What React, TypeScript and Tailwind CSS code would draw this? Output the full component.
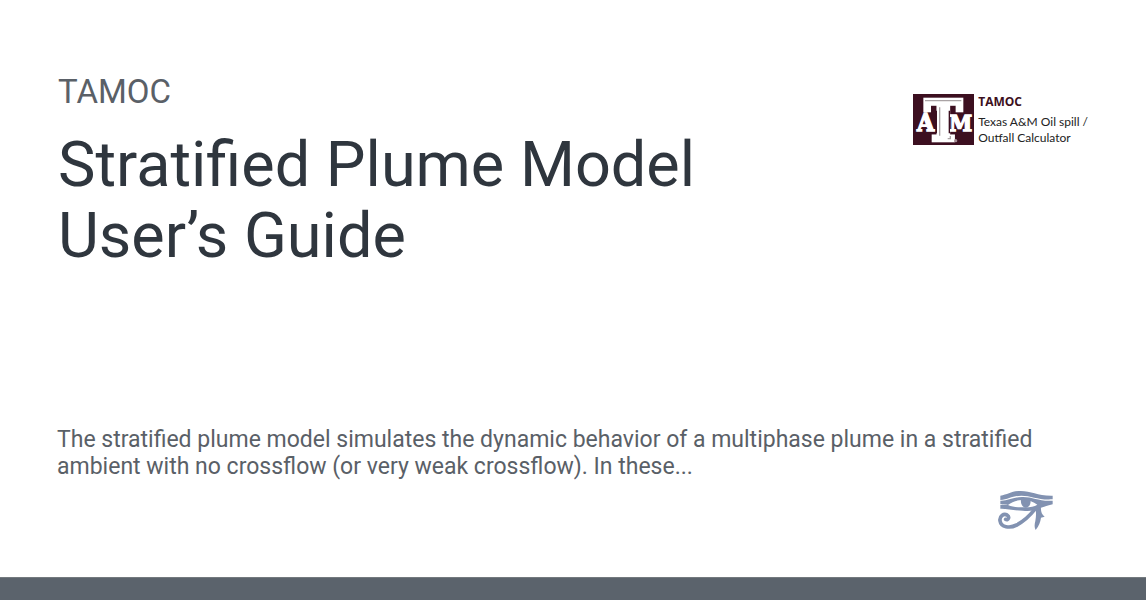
function UniversityMark() {
  return (
    <svg className="h-[51px] w-[61px] shrink-0 overflow-visible" viewBox="0 0 183 153" role="img" aria-label="Texas A&M">
      <rect width="183" height="153" fill="#3c0f20" />
      <g fontFamily="'DejaVu Serif Condensed', 'DejaVu Serif', serif" fontWeight="700" textAnchor="middle" fill="#ffffff">
        <text x="91" y="138" fontSize="164" stroke="#ffffff" strokeWidth="13">T</text>
        <text x="38" y="111" fontSize="74" stroke="#ffffff" strokeWidth="4">A</text>
        <text x="143" y="111" fontSize="69" stroke="#ffffff" strokeWidth="4">M</text>
      </g>
      <path d="M36 20H145M80 40V125M112 126V134H104" fill="none" stroke="#aaa3a5" strokeWidth="4" />
      <path d="M70 50V118M109 50V118" fill="none" stroke="#3c0f20" strokeWidth="4" />
      <circle cx="128" cy="140" r="5" fill="#a58b94" />
    </svg>
  );
}

function EyeOfHorus() {
  return (
    <svg className="h-[56px] w-[72px]" viewBox="0 0 216 168" role="img" aria-label="Eye of Horus">
      <g fill="#8292b1">
        <path d="M31 41C54 38 64 27 92 27C124 27 143 42 188 41V52C145 55 125 41 94 41C67 41 55 53 31 54Z" />
        <path
          fillRule="evenodd"
          d="M31 56C54 57 66 46 96 45C129 44 146 59 188 56V67C177 70 166 73 153 77C134 87 116 88 98 86C68 85 50 79 31 80V69C39 70 47 68 54 66C47 67 39 68 31 67ZM54 69C69 76 83 76 104 76C122 76 133 74 142 68C130 59 117 54 98 54C78 54 66 60 54 69Z"
        />
        <path d="M93 52H121C124 65 118 76 108 77C98 77 91 66 93 52Z" />
        <path d="M135 78L153 76C152 88 155 97 164 104L153 107C151 120 147 132 137 144C132 133 134 125 136 117C138 105 140 90 135 78Z" />
      </g>
      <path
        d="M136 80C122 98 103 117 80 129C59 140 33 136 30 116C28 102 41 94 51 99C60 105 55 116 47 112"
        fill="none"
        stroke="#8292b1"
        strokeWidth="11"
        strokeLinecap="round"
      />
    </svg>
  );
}

export default function App() {
  return (
    <div className="flex min-h-screen flex-col bg-white font-['Roboto',sans-serif]">
      <main className="flex grow flex-col pt-[72px]">
        <header className="flex items-start justify-between px-[58px]">
          <div>
            <p className="text-[33px] leading-[40px] text-[#5a6067]">TAMOC</p>
            <h1 className="mt-[17px] max-w-[720px] text-[63px] leading-[71px] text-[#2f363e]">
              Stratified Plume Model User’s Guide
            </h1>
          </div>
          <div className="mt-[22px] flex gap-1 font-['Lato',sans-serif] text-[12px] leading-4 text-[#222222]">
            <UniversityMark />
            <div className="whitespace-nowrap">
              <p className="font-['Open_Sans',sans-serif] font-bold text-[#3c0f20]">TAMOC</p>
              <p className="mt-1">
                Texas A&amp;M Oil spill /<br />
                Outfall Calculator
              </p>
            </div>
          </div>
        </header>
        <p className="mt-auto pr-[58px] pl-[57px] text-[23px] leading-[27px] text-[#5a6067]">
          The stratified plume model simulates the dynamic behavior of a multiphase plume in a stratified ambient with
          no crossflow (or very weak crossflow). In these...
        </p>
        <div className="mt-0.5 mb-[39px] flex justify-end pr-[84px]">
          <EyeOfHorus />
        </div>
      </main>
      <footer className="h-[23px] border-t border-[#747a7e] bg-[#5b636c]" />
    </div>
  );
}
